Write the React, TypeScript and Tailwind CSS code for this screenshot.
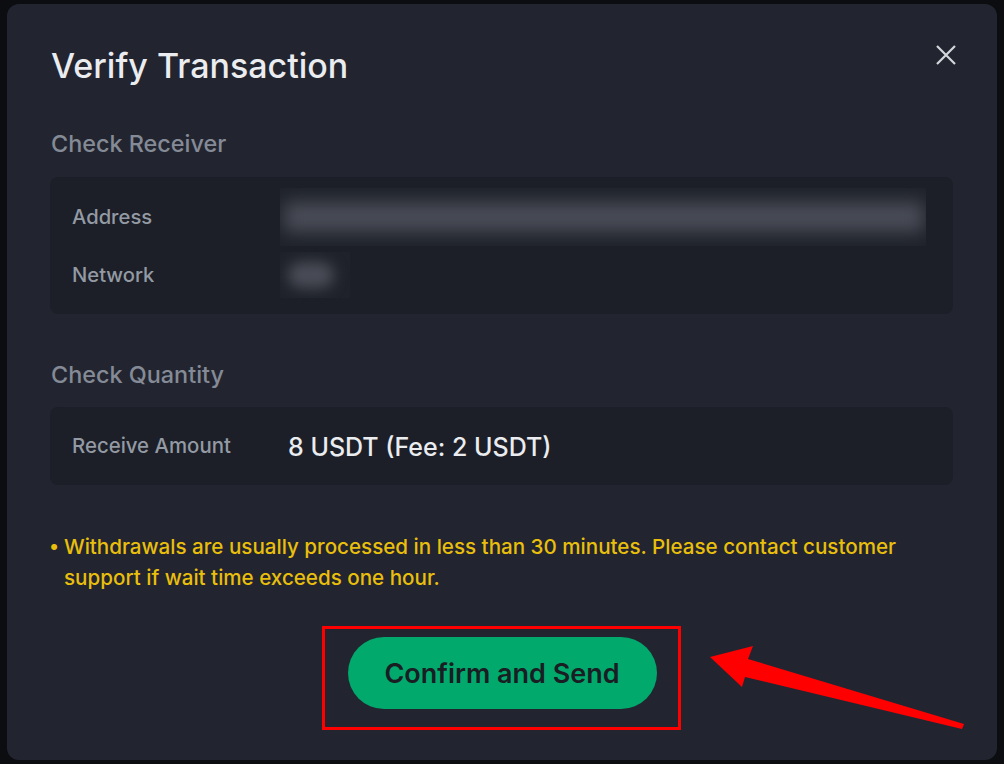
import React from "react";

function CloseIcon() {
  return (
    <svg width="22" height="22" viewBox="0 0 22 22" fill="none">
      <path d="M2 2L20 20M20 2L2 20" stroke="#d4d6da" strokeWidth="2.2" strokeLinecap="butt" />
    </svg>
  );
}

function Arrow() {
  return (
    <svg className="absolute left-0 top-0" width="1004" height="764" viewBox="0 0 1004 764" fill="none">
      <polygon
        points="710,657 753,646 748,659 964,724 962,729 745,677 742,687"
        fill="#ff0000"
      />
    </svg>
  );
}

export default function App() {
  const font = { fontFamily: "Inter, 'Noto Sans', sans-serif" };
  return (
    <div className="relative w-[1004px] h-[764px] bg-[#0b0d11] overflow-hidden" style={font}>
      <div className="absolute left-[7px] top-[4px] w-[990px] h-[756px] rounded-[12px] bg-[#222530] pl-[44px] pr-[44px] pt-[40px] flex flex-col">
        <div className="flex items-center justify-between">
          <h1 className="text-[34px] leading-[44px] font-medium text-[#eaecef]">Verify Transaction</h1>
          <div className="absolute right-[40px] top-[40px]">
            <CloseIcon />
          </div>
        </div>

        <div className="mt-[40px] text-[23.4px] leading-[32px] font-medium text-[#858b96]">Check Receiver</div>

        <div className="mt-[17px] -ml-px w-[903px] rounded-[8px] bg-[#1c1f27] pl-[22px] pt-[16px] pb-[15px] flex flex-col gap-[10px]">
          <div className="flex items-center h-[48px]">
            <div className="w-[208px] text-[20.2px] font-medium text-[#939aa4]">Address</div>
            <div className="relative h-[58px] w-[646px] overflow-hidden bg-[#1f222a]">
              <div className="absolute left-[4px] right-[2px] top-[14px] h-[30px] bg-[#4a4d57] blur-[9px]" />
            </div>
          </div>
          <div className="flex items-center h-[48px]">
            <div className="w-[208px] text-[20.2px] font-medium text-[#939aa4]">Network</div>
            <div className="relative h-[46px] w-[70px] overflow-hidden bg-[#1f222a]">
              <div className="absolute left-[8px] top-[10px] h-[26px] w-[46px] rounded-full bg-[#4a4d57] blur-[7px]" />
            </div>
          </div>
        </div>

        <div className="mt-[45px] text-[23.4px] leading-[32px] font-medium text-[#858b96]">Check Quantity</div>

        <div className="mt-[16px] -ml-px w-[903px] h-[78px] rounded-[8px] bg-[#1c1f27] pl-[22px] flex items-center">
          <div className="w-[216px] text-[20.4px] font-medium text-[#939aa4]">Receive Amount</div>
          <div className="pt-[3px] text-[25px] font-medium text-[#eaecef]">8 USDT (Fee: 2 USDT)</div>
        </div>

        <div className="mt-[46px] -ml-[2px] flex text-[20.6px] leading-[31px] font-medium text-[#e9bf0c]">
          <span className="w-[15px] shrink-0 text-[19px]">•</span>
          <p>
            Withdrawals are usually processed in less than 30 minutes. Please contact customer
            <br />
            support if wait time exceeds one hour.
          </p>
        </div>

        <div className="mt-[44px] flex justify-center">
          <button className="h-[72px] w-[309px] rounded-full bg-[#02a96c] pt-[3px] text-[27px] font-semibold text-[#1a1d23]">
            Confirm and Send
          </button>
        </div>
      </div>

      <div className="absolute left-[322px] top-[626px] w-[359px] h-[104px] border-[3px] border-[#ff0000]" />
      <Arrow />
    </div>
  );
}
